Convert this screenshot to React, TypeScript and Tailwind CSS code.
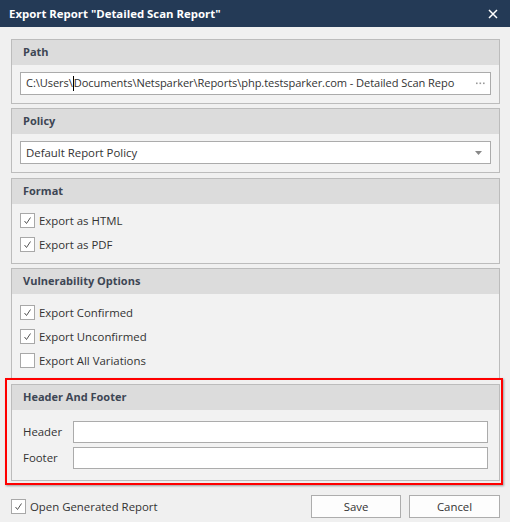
import React from "react";

function Check({ checked }: { checked: boolean }) {
  return (
    <div className="w-[15px] h-[15px] border border-[#a8a8a8] bg-white flex items-center justify-center shrink-0">
      {checked && (
        <svg width="11" height="11" viewBox="0 0 11 11">
          <polyline points="2.5,6 4.5,8.5 8.5,2.5" fill="none" stroke="#555" strokeWidth="1" />
        </svg>
      )}
    </div>
  );
}

function Group({ title, children, className = "" }: { title: string; children: React.ReactNode; className?: string }) {
  return (
    <div className={"border border-[#bcbcbc] bg-[#f2f2f2] " + className}>
      <div className="h-[25px] bg-[#dcdcdc] pl-[11px] flex items-center font-bold text-[11px] text-[#3d4654]">{title}</div>
      {children}
    </div>
  );
}

function CheckRow({ checked, label }: { checked: boolean; label: string }) {
  return (
    <div className="flex items-center h-[15px] gap-[4px]">
      <Check checked={checked} />
      <span className="text-[#333]">{label}</span>
    </div>
  );
}

export default function App() {
  return (
    <div className="w-[510px] h-[522px] bg-[#f0f0f0] text-[11.4px] text-[#333] font-['Open_Sans',sans-serif] overflow-hidden">
      <div className="h-[27px] bg-[#243a56] flex items-center justify-between pl-[9px] pr-[12px] text-white">
        <span className="font-bold text-[11.4px]">Export Report "Detailed Scan Report"</span>
        <svg width="10" height="10" viewBox="0 0 10 10">
          <path d="M1 1 L9 9 M9 1 L1 9" stroke="white" strokeWidth="1.5" />
        </svg>
      </div>
      <div className="pl-[11px] pr-[10px] pt-[12px] flex flex-col">
        <Group title="Path">
          <div className="px-[8px] pt-[7px] pb-[8px]">
            <div className="h-[23px] border border-[#ababab] bg-white flex items-center pl-[5px] pr-[5px]">
              <div className="flex-1 overflow-hidden whitespace-nowrap flex items-center text-[11.1px] tracking-[-0.08px]">
                <span>C:\Users\</span>
                <span className="inline-block w-[1px] h-[15px] bg-black" />
                <span>Documents\Netsparker\Reports\php.testsparker.com - Detailed Scan Repo</span>
              </div>
              <svg width="9" height="3" viewBox="0 0 9 3" className="ml-[6px] shrink-0">
                <rect x="0" y="0.5" width="1.6" height="1.6" fill="#999" />
                <rect x="3.5" y="0.5" width="1.6" height="1.6" fill="#999" />
                <rect x="7" y="0.5" width="1.6" height="1.6" fill="#999" />
              </svg>
            </div>
          </div>
        </Group>
        <Group title="Policy" className="mt-[4px]">
          <div className="px-[8px] pt-[7px] pb-[8px]">
            <div className="h-[23px] border border-[#ababab] bg-white flex items-center pl-[5px] pr-[8px]">
              <span className="flex-1">Default Report Policy</span>
              <svg width="7" height="4" viewBox="0 0 7 4">
                <polygon points="0,0 7,0 3.5,4" fill="#888" />
              </svg>
            </div>
          </div>
        </Group>
        <Group title="Format" className="mt-[5px]">
          <div className="px-[8px] pt-[9px] pb-[11px] flex flex-col gap-[9px]">
            <CheckRow checked label="Export as HTML" />
            <CheckRow checked label="Export as PDF" />
          </div>
        </Group>
        <Group title="Vulnerability Options" className="mt-[4px]">
          <div className="px-[8px] pt-[11px] pb-[10px] flex flex-col gap-[9px]">
            <CheckRow checked label="Export Confirmed" />
            <CheckRow checked label="Export Unconfirmed" />
            <CheckRow checked={false} label="Export All Variations" />
          </div>
        </Group>
        <div className="relative mt-[5px]">
          <Group title="Header And Footer">
            <div className="pl-[11px] pr-[11px] pt-[11px] pb-[11px] flex flex-col gap-[4px]">
              <div className="flex items-center">
                <span className="w-[50px] text-[#333]">Header</span>
                <div className="flex-1 h-[22px] border border-[#ababab] bg-white" />
              </div>
              <div className="flex items-center">
                <span className="w-[50px] text-[#333]">Footer</span>
                <div className="flex-1 h-[22px] border border-[#ababab] bg-white" />
              </div>
            </div>
          </Group>
          <div className="absolute left-[-6px] right-[-3px] top-[-6px] bottom-[-4px] border-2 border-[#ff0000] shadow-[1px_1px_2px_rgba(0,0,0,0.35)] pointer-events-none" />
        </div>
        <div className="mt-[14px] h-[23px] flex items-center">
          <div className="flex items-center gap-[4px]">
            <Check checked />
            <span>Open Generated Report</span>
          </div>
          <div className="ml-auto flex gap-[8px]">
            <button className="w-[90px] h-[23px] border border-[#adadad] bg-[#fdfdfd] text-[#333]">Save</button>
            <button className="w-[91px] h-[23px] border border-[#adadad] bg-[#fdfdfd] text-[#333]">Cancel</button>
          </div>
        </div>
      </div>
    </div>
  );
}
